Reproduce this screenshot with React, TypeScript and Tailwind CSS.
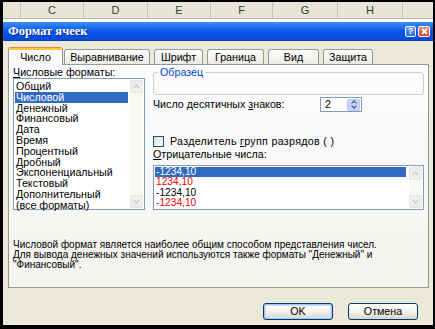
const formats = [
  "Общий",
  "Числовой",
  "Денежный",
  "Финансовый",
  "Дата",
  "Время",
  "Процентный",
  "Дробный",
  "Экспоненциальный",
  "Текстовый",
  "Дополнительный",
  "(все форматы)",
];

const negatives = [
  { text: "-1234,10", red: false },
  { text: "1234,10", red: true },
  { text: "-1234,10", red: false },
  { text: "-1234,10", red: true },
];

const columns = [
  { name: "C", w: "w-[63px]" },
  { name: "D", w: "w-[64px]" },
  { name: "E", w: "w-[63px]" },
  { name: "F", w: "w-[62px]" },
  { name: "G", w: "w-[65px]" },
  { name: "H", w: "w-[65px]" },
];

function ScrollArrow({ down }: { down?: boolean }) {
  return (
    <div className="w-[13px] h-[13px] rounded-[2px] bg-[#eeeeea] border border-[#e4e4df] flex items-center justify-center">
      <svg width="7" height="5" viewBox="0 0 7 5">
        <path
          d={down ? "M0.8 1 L3.5 3.8 L6.2 1" : "M0.8 4 L3.5 1.2 L6.2 4"}
          fill="none"
          stroke="#c5c9d3"
          strokeWidth="1.4"
        />
      </svg>
    </div>
  );
}

function ScrollBar() {
  return (
    <div className="w-[13px] h-full flex flex-col justify-between bg-[#f8f8f5]">
      <ScrollArrow />
      <ScrollArrow down />
    </div>
  );
}

function Tab({ label, w, selected }: { label: string; w: string; selected?: boolean }) {
  if (selected) {
    return (
      <div className={`${w} h-[18px] -mb-[1px] relative z-10 flex flex-col rounded-t-[3px] border-x border-[#919b9c] bg-[#fcfcfe] overflow-hidden`}>
        <div className="h-[1px] bg-[#e68b2c]" />
        <div className="h-[2px] bg-[#ffc73c]" />
        <div className="flex-1 flex items-center justify-center leading-none pb-[1px]">{label}</div>
      </div>
    );
  }
  return (
    <div className={`${w} h-[15px] flex items-center justify-center rounded-t-[3px] border-x border-t border-[#919b9c] bg-gradient-to-b from-[#fefefe] to-[#ebeae4] leading-none`}>
      {label}
    </div>
  );
}

function XpButton({ label, def }: { label: string; def?: boolean }) {
  return (
    <div
      className={`w-[70px] h-[17px] rounded-[3px] border border-[#003c74] bg-gradient-to-b from-[#ffffff] via-[#f4f3ee] to-[#d8d4c8] flex items-center justify-center ${
        def ? "shadow-[inset_0_0_0_1px_#a9c4f4,inset_0_0_0_2px_#cfdff9]" : ""
      }`}
    >
      {label}
    </div>
  );
}

export default function App() {
  return (
    <div className="w-[435px] h-[329px] bg-black pl-[3px] pr-[2px] pt-[2px] pb-[4px] overflow-hidden font-['Liberation_Sans',Arial,sans-serif] text-[10.7px] text-black">
      <div className="flex flex-col h-full">
        {/* sheet column header */}
        <div className="h-[17px] flex bg-[#e6e5d8] border-b border-[#b9b8a9] text-[11px] text-[#3a3a3a] leading-none">
          <div className="w-[17px]" />
          {columns.map((c) => (
            <div key={c.name} className={`${c.w} border-l border-[#c6c5b6] flex items-center justify-center`}>
              {c.name}
            </div>
          ))}
          <div className="flex-1 border-l border-[#c6c5b6]" />
        </div>
        <div className="h-[3px] bg-white" />

        {/* title bar */}
        <div className="h-[19px] flex items-center justify-between pl-[5px] pr-[3px] bg-gradient-to-b from-[#3d8cf6] via-[#0758ec] to-[#0a49d8] border-b border-[#0b3fb8]">
          <span className="font-['Liberation_Serif',serif] font-bold text-[12.5px] text-white [text-shadow:1px_1px_0_#0a2a8a] leading-none">
            Формат ячеек
          </span>
          <div className="flex gap-[2px]">
            <div className="w-[11px] h-[11px] rounded-[2px] border border-white bg-gradient-to-b from-[#6ea0f8] to-[#2b67e6] text-white font-bold text-[9px] leading-none flex items-center justify-center">
              ?
            </div>
            <div className="w-[12px] h-[11px] rounded-[2px] border border-white bg-gradient-to-b from-[#f08a6a] to-[#d43a14] flex items-center justify-center">
              <svg width="7" height="7" viewBox="0 0 7 7">
                <path d="M1 1 L6 6 M6 1 L1 6" stroke="white" strokeWidth="1.8" />
              </svg>
            </div>
          </div>
        </div>

        {/* dialog body */}
        <div className="flex-1 bg-[#ece9d8] pl-[5px] pr-[4px] pt-[6px] flex flex-col">
          <div className="h-[17px] flex items-end">
            <Tab label="Число" w="w-[55px]" selected />
            <div className="ml-[1px]">
              <Tab label="Выравнивание" w="w-[86px]" />
            </div>
            <div className="ml-[4px]">
              <Tab label="Шрифт" w="w-[49px]" />
            </div>
            <div className="ml-[4px]">
              <Tab label="Граница" w="w-[57px]" />
            </div>
            <div className="ml-[4px]">
              <Tab label="Вид" w="w-[51px]" />
            </div>
            <div className="ml-[4px]">
              <Tab label="Защита" w="w-[50px]" />
            </div>
          </div>

          <div className="h-[224px] border border-[#919b9c] bg-gradient-to-b from-[#fcfcfe] to-[#f4f3ee] pt-[2px] pl-[4px] pr-[4px] flex flex-col">
            <div className="flex">
              {/* left column */}
              <div className="w-[132px] flex flex-col">
                <div className="h-[11px] leading-[11px]">
                  <span className="underline">Ч</span>исловые форматы:
                </div>
                <div className="h-[132px] border border-[#7f9db9] bg-white flex p-[1px]">
                  <div className="flex-1 pt-[1px] pr-[2px]">
                    {formats.map((f) => (
                      <div
                        key={f}
                        className={`h-[10.8px] leading-[10.8px] pl-[1px] whitespace-nowrap ${
                          f === "Числовой" ? "bg-[#316ac5] text-white" : ""
                        }`}
                      >
                        {f}
                      </div>
                    ))}
                  </div>
                  <ScrollBar />
                </div>
              </div>

              {/* right column */}
              <div className="flex-1 ml-[8px] flex flex-col">
                <fieldset className="h-[28px] border border-[#d0d0bf] rounded-[3px] px-[4px]">
                  <legend className="px-[2px] text-[#0046d5] leading-[11px]">Образец</legend>
                </fieldset>
                <div className="mt-[2px] h-[15px] flex items-center">
                  <div className="w-[167px]">
                    Число десятичных <span className="underline">з</span>наков:
                  </div>
                  <div className="w-[42px] h-[15px] border border-[#7f9db9] bg-white flex items-center justify-between pl-[4px] pr-[1px]">
                    <span className="leading-none">2</span>
                    <div className="w-[13px] h-[12px] rounded-[2px] bg-[#c6d5fb] border border-[#b4c6f2] flex flex-col items-center justify-center gap-[1px]">
                      <svg width="6" height="4" viewBox="0 0 6 4">
                        <path d="M0.6 3.4 L3 1 L5.4 3.4" fill="none" stroke="#4d6185" strokeWidth="1.3" />
                      </svg>
                      <svg width="6" height="4" viewBox="0 0 6 4">
                        <path d="M0.6 0.6 L3 3 L5.4 0.6" fill="none" stroke="#4d6185" strokeWidth="1.3" />
                      </svg>
                    </div>
                  </div>
                </div>
                <div className="mt-[24px] h-[11px] flex items-center">
                  <div className="w-[11px] h-[11px] border border-[#1c5180] bg-gradient-to-br from-[#dcdcd7] to-white" />
                  <div className="ml-[6px] leading-none tracking-[0.3px]">
                    Разделитель <span className="underline">г</span>рупп разрядов ( )
                  </div>
                </div>
                <div className="mt-[2px] h-[11px] leading-[11px]">
                  <span className="underline">О</span>трицательные числа:
                </div>
                <div className="mt-[5px] h-[45px] border border-[#7f9db9] bg-white flex p-[1px]">
                  <div className="flex-1 pr-[3px] text-[10.2px]">
                    {negatives.map((n, i) => (
                      <div
                        key={i}
                        className={`h-[10.25px] leading-[10.25px] pl-[1px] ${
                          i === 0 ? "bg-[#316ac5] text-white" : n.red ? "text-[#ff0000]" : ""
                        }`}
                      >
                        {n.text}
                      </div>
                    ))}
                  </div>
                  <ScrollBar />
                </div>
              </div>
            </div>

            <div className="mt-[30px] text-[10px] leading-[10px] whitespace-nowrap">
              <div>Числовой формат является наиболее общим способом представления чисел.</div>
              <div>Для вывода денежных значений используются также форматы "Денежный" и</div>
              <div>"Финансовый".</div>
            </div>
          </div>

          <div className="mt-[15px] flex justify-end gap-[15px] pr-[11px]">
            <XpButton label="OK" def />
            <XpButton label="Отмена" />
          </div>
        </div>
      </div>
    </div>
  );
}
